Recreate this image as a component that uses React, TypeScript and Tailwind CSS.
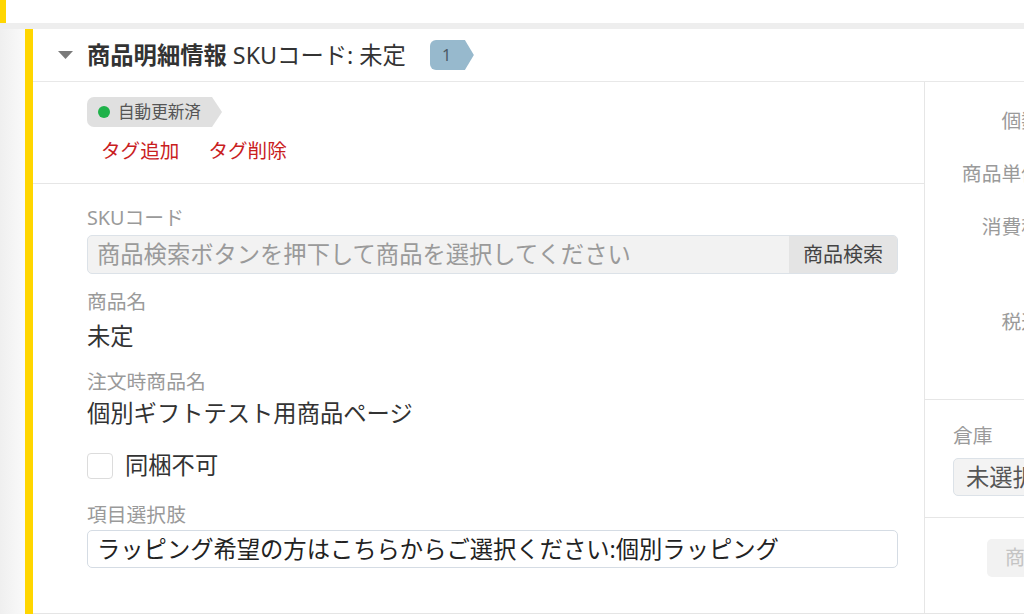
import React from "react";

const font = "font-['Noto_Sans','Noto_Sans_CJK_JP',sans-serif]";

function Field({ label, children, className = "" }: { label: string; children: React.ReactNode; className?: string }) {
  return (
    <div className={className}>
      <div className="h-[28px] text-[19.8px] leading-[28px] text-[#9a9a9a]">{label}</div>
      {children}
    </div>
  );
}

export default function App() {
  return (
    <div className={`w-[1024px] h-[614px] overflow-hidden bg-white flex flex-col ${font}`}>
      {/* previous block tail */}
      <div className="h-[23px] flex shrink-0">
        <div className="w-[6px] bg-[#ffd600]" />
        <div className="flex-1 bg-white" />
      </div>
      <div className="h-[6px] bg-[#eeeeee] shrink-0" />

      <div className="flex flex-1 min-h-0">
        <div className="w-[25px] shrink-0 bg-gradient-to-r from-[#efefef] to-[#fafafa]" />
        <div className="w-[8px] shrink-0 bg-[#ffd600]" />

        <div className="flex-1 min-w-0 flex flex-col border-b border-[#e5e5e5]">
          {/* header */}
          <div className="h-[53px] shrink-0 flex items-center border-b border-[#e8e8e8] pl-[25px]">
            <svg width="15" height="8" viewBox="0 0 15 8" className="shrink-0">
              <path d="M0 0 L15 0 L7.5 8 Z" fill="#7a7a7a" />
            </svg>
            <div className="ml-[14px] text-[23.3px] leading-[30px] text-[#333] whitespace-nowrap">
              <span className="font-bold">商品明細情報</span>
              <span> SKUコード: 未定</span>
            </div>
            <div className="ml-[24px] h-[30px] w-[44px] pl-[12px] flex items-center rounded-l-[6px] bg-[#97b9cd] text-[16px] text-[#4b5a66] [clip-path:polygon(0_0,calc(100%-9px)_0,100%_50%,calc(100%-9px)_100%,0_100%)]">
              1
            </div>
          </div>

          <div className="flex flex-1 min-h-0">
            {/* left column */}
            <div className="w-[892px] shrink-0 border-r border-[#e6e6e6] flex flex-col">
              <div className="h-[102px] shrink-0 border-b border-[#e6e6e6] pl-[54px] pt-[15px]">
                <div className="h-[30px] w-[135px] flex items-center pl-[11px] rounded-l-[7px] bg-[#e0e0e0] [clip-path:polygon(0_0,calc(100%-10px)_0,100%_50%,calc(100%-10px)_100%,0_100%)]">
                  <span className="w-[12px] h-[12px] rounded-full bg-[#1fb24a]" />
                  <span className="ml-[8px] text-[16.6px] text-[#555] leading-none">自動更新済</span>
                </div>
                <div className="mt-[10px] flex pl-[14px] text-[19.6px] leading-[28px] text-[#c9201e]">
                  <span>タグ追加</span>
                  <span className="ml-[29px]">タグ削除</span>
                </div>
              </div>

              <div className="pl-[54px] pr-[26px] pt-[20px] text-[#333]">
                <Field label="SKUコード">
                  <div className="mt-[3px] h-[39px] flex rounded-[5px] border border-[#dce2e8] bg-[#f2f2f2] overflow-hidden">
                    <div className="flex-1 flex items-center pl-[9px] text-[23.3px] text-[#9a9a9a] whitespace-nowrap">
                      商品検索ボタンを押下して商品を選択してください
                    </div>
                    <div className="w-[108px] flex items-center justify-center bg-[#e4e4e4] text-[20px] text-[#444]">
                      商品検索
                    </div>
                  </div>
                </Field>
                <Field label="商品名" className="mt-[14px]">
                  <div className="mt-[4px] h-[32px] text-[23.3px] leading-[32px]">未定</div>
                </Field>
                <Field label="注文時商品名" className="mt-[16px]">
                  <div className="mt-[1px] h-[32px] text-[23.3px] leading-[32px]">個別ギフトテスト用商品ページ</div>
                </Field>
                <div className="mt-[24px] flex items-center h-[26px]">
                  <div className="w-[26px] h-[26px] rounded-[4px] border border-[#dcdcdc] bg-white" />
                  <span className="ml-[12px] text-[23.3px] leading-none">同梱不可</span>
                </div>
                <Field label="項目選択肢" className="mt-[22px]">
                  <div className="mt-[1px] h-[38px] flex items-center pl-[9px] rounded-[5px] border border-[#d5dce4] bg-white text-[23.3px] text-[#222] whitespace-nowrap">
                    ラッピング希望の方はこちらからご選択ください:個別ラッピング
                  </div>
                </Field>
              </div>
            </div>

            {/* right column */}
            <div className="w-[160px] shrink-0 flex flex-col">
              <div className="h-[318px] shrink-0 border-b border-[#e6e6e6] pt-[25px] text-[19.8px] leading-[28px] text-[#9a9a9a]">
                <div className="w-[116px] text-right">個数</div>
                <div className="w-[116px] text-right mt-[25px]">商品単価</div>
                <div className="w-[116px] text-right mt-[25px]">消費税</div>
                <div className="w-[116px] text-right mt-[67px]">税込</div>
              </div>
              <div className="h-[118px] shrink-0 border-b border-[#e6e6e6] pl-[28px] pt-[22px]">
                <div className="h-[28px] text-[19.8px] leading-[28px] text-[#9a9a9a]">倉庫</div>
                <div className="mt-[8px] h-[38px] w-[140px] flex items-center pl-[12px] rounded-[5px] border border-[#dce2e8] bg-[#f3f3f3] text-[23.3px] text-[#555] whitespace-nowrap">
                  未選択
                </div>
              </div>
              <div className="pl-[62px] pt-[21px]">
                <div className="h-[38px] w-[120px] flex items-center pl-[18px] rounded-[5px] bg-[#f2f2f2] text-[20px] text-[#c4c4c4] whitespace-nowrap">
                  商品を追加
                </div>
              </div>
            </div>
          </div>
        </div>
      </div>
    </div>
  );
}
